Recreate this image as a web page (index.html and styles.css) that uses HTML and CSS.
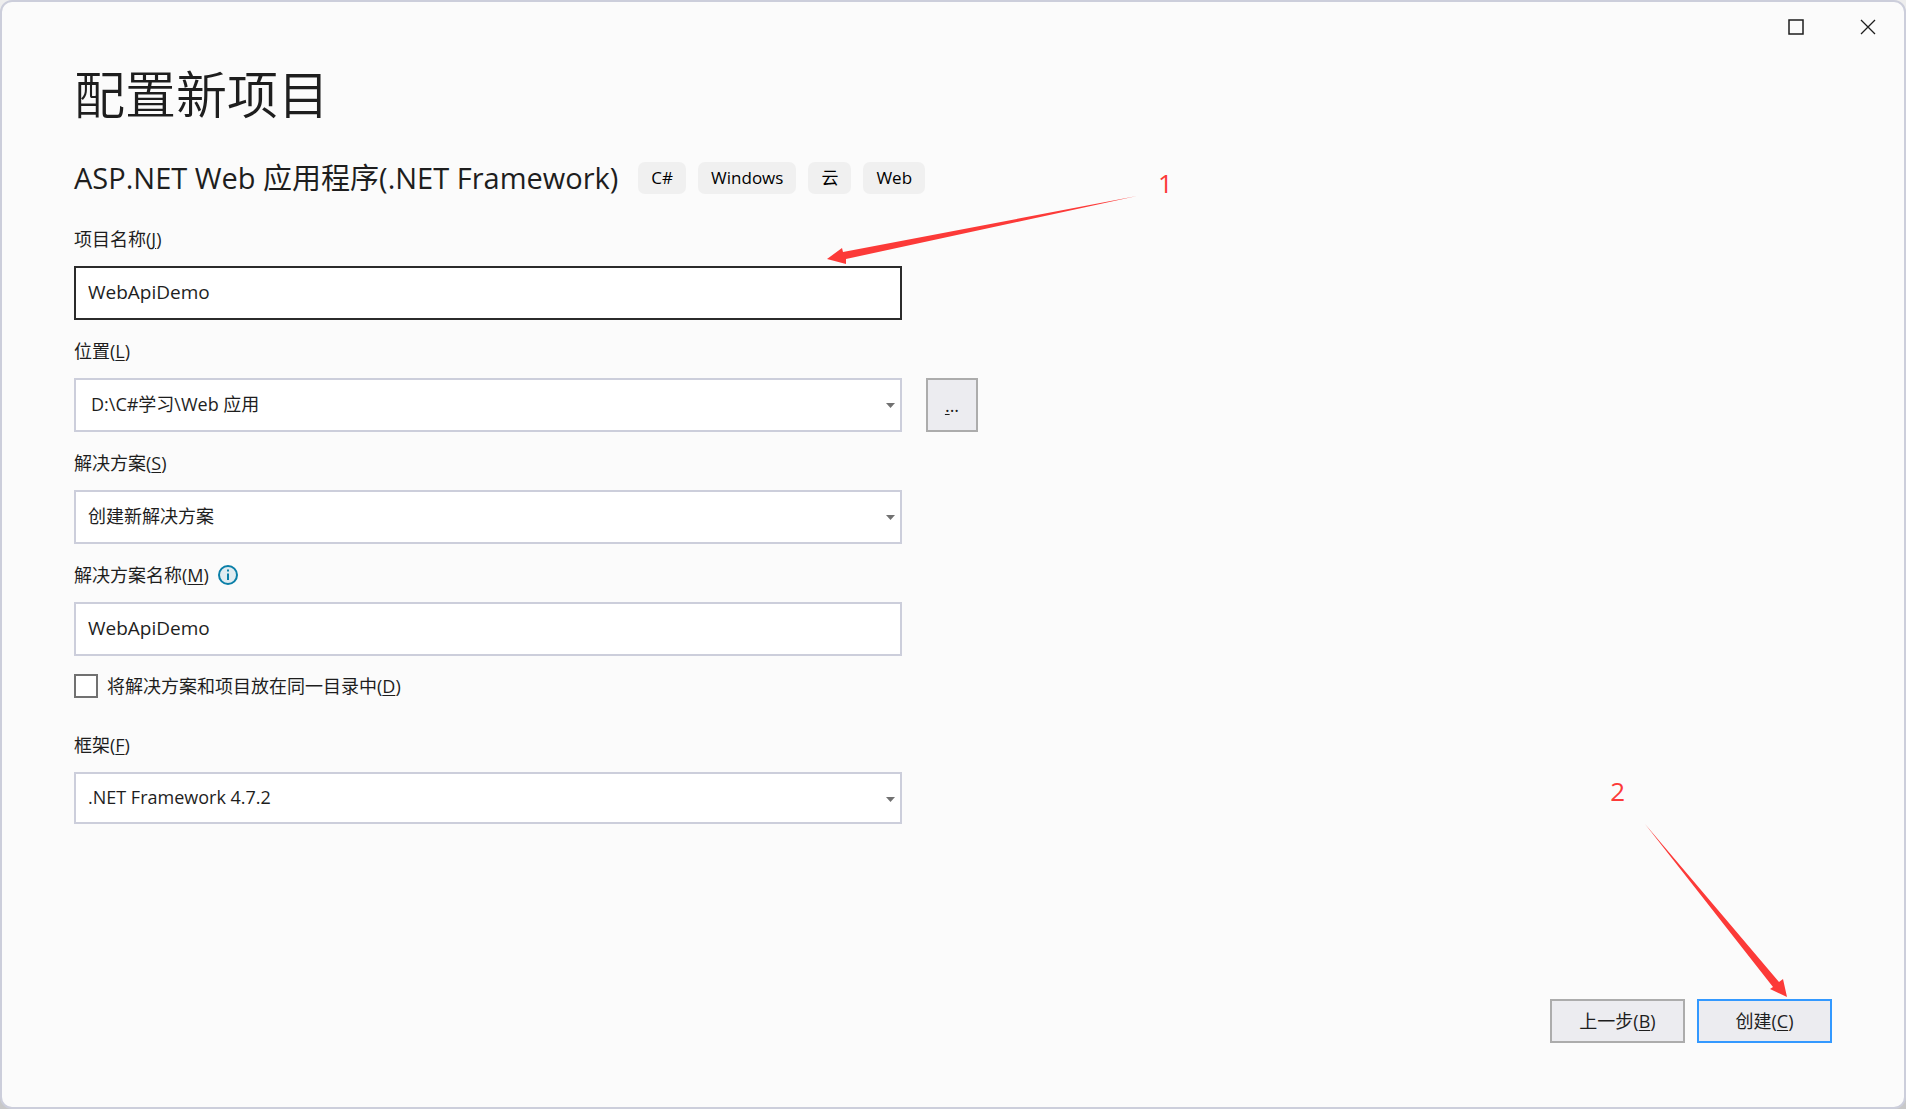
FILE: index.html
```html
<!DOCTYPE html>
<html lang="zh-CN">
<head>
    <meta charset="UTF-8">
    <meta name="viewport" content="width=device-width, initial-scale=1.0">
    <title>配置新项目</title>
    <link rel="stylesheet" href="styles.css">
</head>
<body>
    <div class="window">
        <div class="titlebar">
            <button class="window-button" type="button" aria-label="最大化">
                <svg width="16" height="16" viewBox="0 0 16 16"><rect x="1" y="1" width="14" height="14" fill="none" stroke="#1e1e1e" stroke-width="1.5"/></svg>
            </button>
            <button class="window-button" type="button" aria-label="关闭">
                <svg width="16" height="16" viewBox="0 0 16 16"><path d="M1 1L15 15M15 1L1 15" stroke="#1e1e1e" stroke-width="1.3"/></svg>
            </button>
        </div>

        <form class="content">
            <h1>配置新项目</h1>

            <div class="template">
                <h2>ASP.NET Web 应用程序(.NET Framework)</h2>
                <ul class="tags">
                    <li>C#</li>
                    <li>Windows</li>
                    <li>云</li>
                    <li>Web</li>
                </ul>
            </div>

            <div class="field">
                <label for="project-name">项目名称(<u>J</u>)</label>
                <div class="control">
                    <input class="box focused" id="project-name" type="text" value="WebApiDemo">
                    <div class="note note-name">
                        <svg width="312" height="72" viewBox="0 0 312 72"><path d="M1 64L16 53L17 57L311 1L20 64L20 69Z" fill="#fc3a38"/></svg>
                        <span>1</span>
                    </div>
                </div>
            </div>

            <div class="field">
                <label for="location">位置(<u>L</u>)</label>
                <div class="control">
                    <div class="select">
                        <select class="box editable" id="location">
                            <option>D:\C#学习\Web 应用</option>
                        </select>
                        <svg class="caret" width="9" height="5" viewBox="0 0 9 5"><path d="M0 0H9L4.5 5Z" fill="#717171"/></svg>
                    </div>
                    <button class="button browse" type="button"><u>.</u>..</button>
                </div>
            </div>

            <div class="field">
                <label for="solution">解决方案(<u>S</u>)</label>
                <div class="control">
                    <div class="select">
                        <select class="box" id="solution">
                            <option>创建新解决方案</option>
                        </select>
                        <svg class="caret" width="9" height="5" viewBox="0 0 9 5"><path d="M0 0H9L4.5 5Z" fill="#717171"/></svg>
                    </div>
                </div>
            </div>

            <div class="field">
                <label for="solution-name">解决方案名称(<u>M</u>)
                    <svg class="info" width="20" height="20" viewBox="0 0 20 20">
                        <circle cx="10" cy="10" r="9" fill="#e0ecf1" stroke="#0a7fa8" stroke-width="2"/>
                        <path d="M9 4.5H11V6.5H9ZM9 8.5H11V15H9Z" fill="#0a7fa8"/>
                    </svg>
                </label>
                <div class="control">
                    <input class="box" id="solution-name" type="text" value="WebApiDemo">
                </div>
            </div>

            <div class="check">
                <input id="same-folder" type="checkbox">
                <label for="same-folder">将解决方案和项目放在同一目录中(<u>D</u>)</label>
            </div>

            <div class="field framework">
                <label for="framework">框架(<u>F</u>)</label>
                <div class="control">
                    <div class="select">
                        <select class="box" id="framework">
                            <option>.NET Framework 4.7.2</option>
                        </select>
                        <svg class="caret" width="9" height="5" viewBox="0 0 9 5"><path d="M0 0H9L4.5 5Z" fill="#717171"/></svg>
                    </div>
                </div>
            </div>

            <div class="actions">
                <button class="button" type="button">上一步(<u>B</u>)</button>
                <button class="button primary" type="submit">创建(<u>C</u>)</button>
                <div class="note note-create">
                    <span>2</span>
                    <svg width="144" height="174" viewBox="0 0 144 174"><path d="M0 0L134 158L138 155L142 173L125 165L128 163Z" fill="#fc3a38"/></svg>
                </div>
            </div>
        </form>
    </div>
</body>
</html>
```
FILE: styles.css
```css
* {
    margin: 0;
    padding: 0;
    box-sizing: border-box;
}

body {
    background: linear-gradient(#eeeeee, #c8c8c8);
    color: #1e1e1e;
    font-family: "Open Sans", "Noto Sans CJK SC", sans-serif;
    font-size: 18px;
    line-height: 24px;
}

button,
input,
select {
    font: inherit;
    color: inherit;
}

u {
    text-underline-offset: 2px;
}

.window {
    min-height: 100vh;
    display: flex;
    flex-direction: column;
    background: #fbfbfb;
    border: 2px solid #cccedb;
    border-radius: 12px;
}

.titlebar {
    display: flex;
    justify-content: flex-end;
}

.window-button {
    width: 72px;
    height: 50px;
    display: flex;
    align-items: center;
    justify-content: center;
    background: none;
    border: none;
}

.content {
    flex: 1;
    display: flex;
    flex-direction: column;
    padding: 10px 72px 64px;
}

h1 {
    font-size: 51px;
    font-weight: 350;
    line-height: 64px;
}

h2 {
    font-size: 29px;
    font-weight: 400;
    line-height: 40px;
}

.template {
    display: flex;
    align-items: center;
    gap: 20px;
    margin: 32px 0 10px;
}

.tags {
    display: flex;
    gap: 12px;
    list-style: none;
}

.tags li {
    padding: 4px 13px;
    background: #f0f0f0;
    border-radius: 7px;
    color: #000;
    font-size: 17px;
}

.field {
    margin-top: 19px;
}

.field label {
    display: flex;
    align-items: center;
    margin-bottom: 15px;
}

.info {
    margin-left: 9px;
}

.control {
    position: relative;
    display: flex;
    gap: 24px;
}

.select {
    position: relative;
}

.select,
.control > .box {
    width: 100%;
    max-width: 828px;
}

.box {
    width: 100%;
    height: 54px;
    padding: 0 12px 2px;
    background: #fff;
    border: 2px solid #cccedb;
    border-radius: 0;
    outline: none;
    appearance: none;
}

input.box {
    font-size: 19px;
}

.focused {
    border-color: #2b2b2b;
}

.editable {
    padding-left: 15px;
}

.caret {
    position: absolute;
    right: 7px;
    top: 25px;
}

.button {
    min-width: 135px;
    height: 44px;
    background: #ececf0;
    border: 2px solid #acacac;
}

.primary {
    border-color: #3399ff;
}

.browse {
    min-width: 52px;
    height: 54px;
}

.check {
    display: flex;
    align-items: center;
    gap: 9px;
    margin-top: 18px;
}

.check input {
    width: 24px;
    height: 24px;
    background: #fff;
    border: 2px solid #717171;
    appearance: none;
}

.framework {
    margin-top: 35px;
}

.framework .box {
    height: 52px;
}

.actions {
    position: relative;
    display: flex;
    justify-content: flex-end;
    gap: 12px;
    margin-top: auto;
}

/* red callouts drawn over the form */
.note {
    position: absolute;
    display: flex;
    color: #fc3a38;
    font-size: 26px;
    line-height: 32px;
    pointer-events: none;
}

.note-name {
    left: 752px;
    bottom: 53px;
    align-items: flex-start;
    gap: 20px;
}

.note-name span {
    margin-top: -28px;
}

.note-create {
    right: 43px;
    bottom: 45px;
    gap: 20px;
}

.note-create span {
    margin-top: -49px;
}
```
